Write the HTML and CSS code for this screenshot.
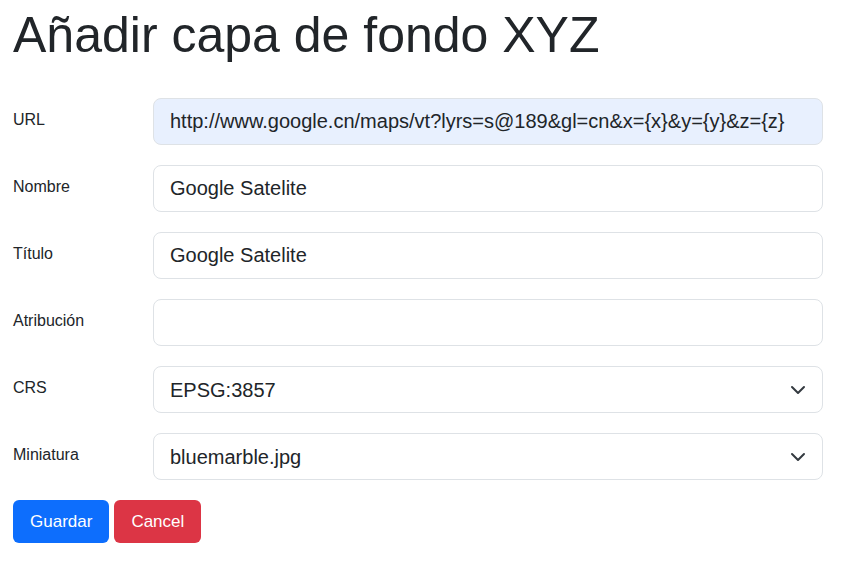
FILE: index.html
```html
<!DOCTYPE html>
<html lang="es">
<head>
  <meta charset="UTF-8">
  <meta name="viewport" content="width=device-width, initial-scale=1.0">
  <title>Añadir capa de fondo XYZ</title>
  <link rel="stylesheet" href="styles.css">
</head>
<body>
  <div class="container">
    <h1>Añadir capa de fondo XYZ</h1>

    <form class="layer-form">
      <div class="row">
        <label class="col-label" for="url">URL</label>
        <input class="form-control autofilled" id="url" type="text" value="http://www.google.cn/maps/vt?lyrs=s@189&amp;gl=cn&amp;x={x}&amp;y={y}&amp;z={z}">
      </div>
      <div class="row">
        <label class="col-label" for="name">Nombre</label>
        <input class="form-control" id="name" type="text" value="Google Satelite">
      </div>
      <div class="row">
        <label class="col-label" for="title">Título</label>
        <input class="form-control" id="title" type="text" value="Google Satelite">
      </div>
      <div class="row">
        <label class="col-label" for="attribution">Atribución</label>
        <input class="form-control" id="attribution" type="text" value="">
      </div>
      <div class="row">
        <label class="col-label" for="crs">CRS</label>
        <div class="form-select" id="crs">
          <span>EPSG:3857</span>
          <svg class="chevron" viewBox="0 0 16 16" width="16" height="16"><path d="m2 5 6 6 6-6" fill="none" stroke="#343a40" stroke-width="2" stroke-linecap="round" stroke-linejoin="round"/></svg>
        </div>
      </div>
      <div class="row">
        <label class="col-label" for="thumb">Miniatura</label>
        <div class="form-select" id="thumb">
          <span>bluemarble.jpg</span>
          <svg class="chevron" viewBox="0 0 16 16" width="16" height="16"><path d="m2 5 6 6 6-6" fill="none" stroke="#343a40" stroke-width="2" stroke-linecap="round" stroke-linejoin="round"/></svg>
        </div>
      </div>

      <div class="buttons">
        <button type="button" class="btn btn-primary">Guardar</button>
        <button type="button" class="btn btn-danger">Cancel</button>
      </div>
    </form>
  </div>
</body>
</html>
```

FILE: styles.css
```css
* {
  margin: 0;
  padding: 0;
  box-sizing: border-box;
}

body {
  font-family: "Liberation Sans", Arial, sans-serif;
  font-size: 16px;
  line-height: 1.5;
  color: #212529;
  background: #fff;
}

.container {
  padding: 5px 0 0 13px;
  width: 823px;
}

h1 {
  font-size: 50px;
  font-weight: 400;
  line-height: 1.2;
  margin-bottom: 33px;
}

.row {
  display: grid;
  grid-template-columns: 140px 670px;
  margin-bottom: 20px;
}

.col-label {
  padding-top: 10px;
}

.form-control,
.form-select {
  display: flex;
  align-items: center;
  width: 100%;
  height: 47px;
  padding: 0 16px;
  font-family: inherit;
  font-size: 20px;
  color: #212529;
  background: #fff;
  border: 1px solid #dee2e6;
  border-radius: 8px;
  outline: none;
}

.autofilled {
  background: #e8f0fe;
}

.form-select {
  justify-content: space-between;
}

.chevron {
  display: block;
}

.buttons {
  display: flex;
  gap: 5px;
}

.btn {
  height: 43px;
  padding: 0 16px;
  font-family: inherit;
  font-size: 17px;
  color: #fff;
  border: 1px solid transparent;
  border-radius: 6px;
  cursor: pointer;
}

.btn-primary {
  background: #0d6efd;
}

.btn-danger {
  background: #dc3545;
}
```
